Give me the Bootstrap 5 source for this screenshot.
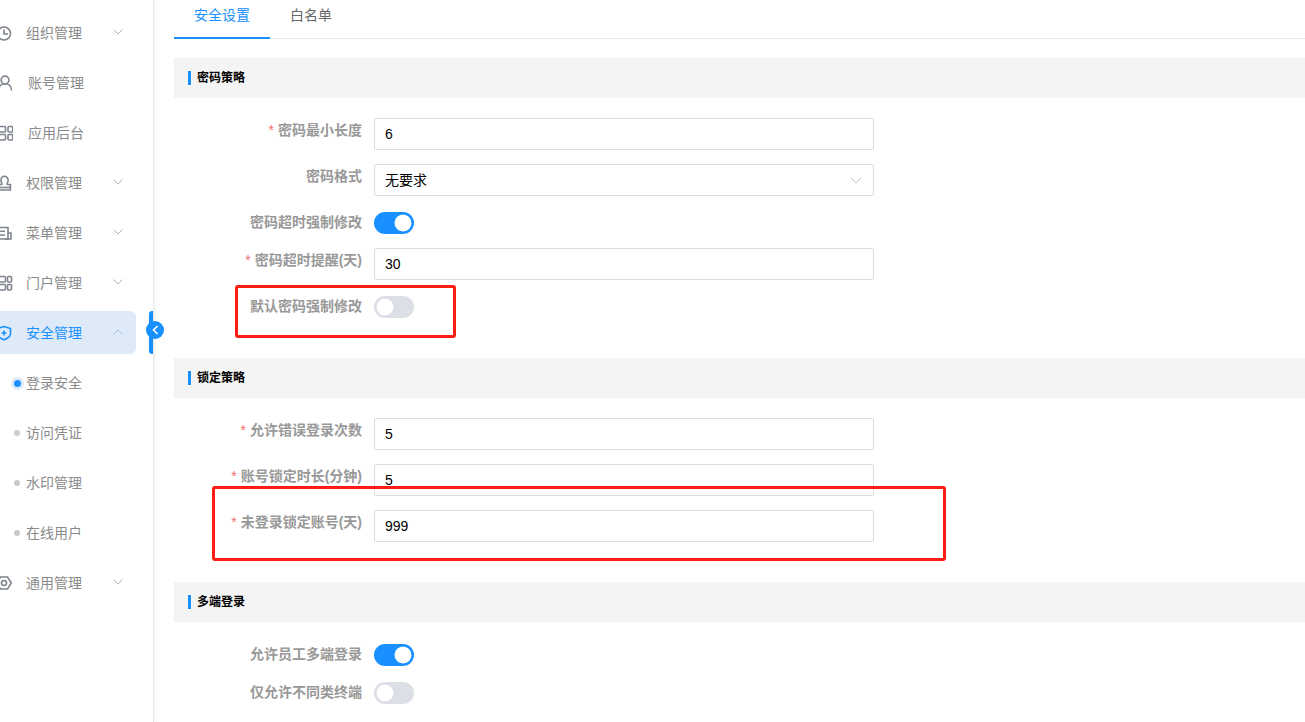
<!DOCTYPE html>
<html lang="zh">
<head>
<meta charset="utf-8">
<title>安全管理</title>
<link href="https://cdn.jsdelivr.net/npm/bootstrap@5.3.0/dist/css/bootstrap.min.css" rel="stylesheet">
<style>
html,body{height:722px;overflow:hidden;background:#fff}
body{font-family:"Liberation Sans","Noto Sans CJK SC",sans-serif;font-size:14px;color:#000}
.shell{height:722px;position:relative;overflow:hidden}
.side{width:154px;flex:none;height:722px;border-right:1px solid #e8e8e8;box-shadow:1px 0 3px rgba(0,0,0,.06);padding-top:8px;overflow:hidden}
.mitem{height:50px;position:relative;display:flex;align-items:center;color:#8a8a8a;font-size:14px;padding-left:26px}
.mitem.pad2{padding-left:28px}
.mitem.on{color:#1890ff}
.mitem.on::before{content:"";position:absolute;left:-10px;right:17px;top:3px;height:43px;background:#deeaf7;border-radius:6px}
.mitem>*{position:relative}
.mico{position:absolute!important;left:-3px;top:17px;width:16px;height:16px;fill:none;stroke:#7f848e;stroke-width:1.6}
.on .mico{stroke:#1890ff}
.chev{position:absolute!important;left:113px;top:21px;width:10px;height:6px;fill:none;stroke:#b3b3b3;stroke-width:1}
.on .chev{stroke:#9cc4ea}
.dot{position:absolute!important;left:14px;top:22px;width:6px;height:6px;border-radius:50%;background:#ccc}
.dot.cur{background:#1890ff;box-shadow:0 0 0 3px #deeaf7;left:14px;width:7px;height:7px}
.handle{position:absolute;left:149px;top:311px;width:4px;height:43px;background:#1890ff;border-radius:3px 0 0 3px}
.hcirc{position:absolute;left:146px;top:321px;width:18px;height:18px;border-radius:50%;background:#1890ff;display:flex;align-items:center;justify-content:center}
.hcirc svg{width:7px;height:10px;fill:none;stroke:#fff;stroke-width:1.6}
.main-pane{margin-left:20px;flex:1;min-width:0}
.tabbar{height:39px;border-bottom:1px solid #e4e7ed;display:flex}
.tabx{width:96px;height:39px;line-height:31px;text-align:center;color:#1890ff;border-bottom:2px solid #1890ff}
.tabx.off{width:auto;padding:0 20px;color:#666;border-bottom:0}
.sect{height:40px;background:#f4f4f4;margin-top:19px;margin-bottom:20px;display:flex;align-items:center;padding-left:14px;font-size:12px;font-weight:700;color:#000}
.sect::before{content:"";width:3px;height:14px;background:#1890ff;margin-right:6px}
.sect.next{margin-top:40px}
.frow{display:flex;margin-bottom:14px}
.flabel{width:200px;padding-right:12px;text-align:right;font-size:14px;line-height:24px;color:#999;font-weight:700;flex:none}
.flabel i{font-style:normal;color:#f56c6c;font-weight:400;margin-right:4px}
.finput.form-control,.finput.form-select{width:500px;height:32px;padding:0 10px;font-size:14px;color:#000;border:1px solid #dcdcdc;border-radius:2px;line-height:30px;font-family:inherit;box-shadow:none}
.finput.form-select{background-image:none;position:relative}
.selwrap{position:relative;width:500px}
.selwrap svg{position:absolute;right:12px;top:13px;width:12px;height:7px;fill:none;stroke:#c0c4cc;stroke-width:1;pointer-events:none}
.form-switch.swx{padding:0;margin:0;min-height:24px;display:flex;align-items:center}
.form-switch.swx .form-check-input{width:40px;height:22px;margin:1px 0 0 0;border:0;border-radius:11px;background-color:#dcdfe6;background-image:radial-gradient(circle closest-side,#fff 8px,transparent 8.8px);background-size:22px 22px;background-repeat:no-repeat;background-position:left center;box-shadow:none}
.form-switch.swx .form-check-input:checked{background-color:#1890ff;background-position:right center;background-image:radial-gradient(circle closest-side,#fff 8px,transparent 8.8px)}
.redbox{position:absolute;border:3px solid #ff1c10;border-radius:3px;pointer-events:none}
.rb1{left:235px;top:285px;width:221px;height:53px}
.rb2{left:212px;top:486px;width:734px;height:75px}
</style>
</head>
<body>
<div class="shell d-flex">
  <nav class="side">
    <div class="mitem"><svg class="mico" viewBox="0 0 16 16"><circle cx="7" cy="8.500" r="6.500"/><path d="M7 4.500V9H11"/></svg><span>组织管理</span><svg class="chev" viewBox="0 0 10 6"><path d="M.5.500l4.500 4.500L9.500.500"/></svg></div>
    <div class="mitem pad2"><svg class="mico" viewBox="0 0 16 16"><circle cx="8" cy="5" r="3.900"/><path d="M1.500 15.500c0-4 2.500-6.700 6.500-6.700s6.500 2.700 6.500 6.700"/></svg><span>账号管理</span></div>
    <div class="mitem pad2"><svg class="mico" viewBox="0 0 16 16"><rect x="2" y="1.500" width="6.500" height="5.500" rx="1"/><rect x="11" y="1.500" width="4.700" height="5.500" rx="1"/><rect x="2" y="9.500" width="6.500" height="5.500" rx="1"/><rect x="11" y="9.500" width="4.700" height="5.500" rx="1"/></svg><span>应用后台</span></div>
    <div class="mitem"><svg class="mico" viewBox="0 0 16 16"><path d="M4.800 9.500V8C3.300 6.500 3.500 1.300 7.500 1.200 11.500 1.300 11.700 6.500 10.200 8V9.500H13.400V15H0V9.500Z"/><path d="M0 12.500h13"/></svg><span>权限管理</span><svg class="chev" viewBox="0 0 10 6"><path d="M.5.500l4.500 4.500L9.500.500"/></svg></div>
    <div class="mitem"><svg class="mico" viewBox="0 0 16 16"><path d="M0 2.500H11V14H0"/><path d="M11 8h3v6H8"/><path d="M3 6.200h5M3 10h5"/></svg><span>菜单管理</span><svg class="chev" viewBox="0 0 10 6"><path d="M.5.500l4.500 4.500L9.500.500"/></svg></div>
    <div class="mitem"><svg class="mico" viewBox="0 0 16 16"><rect x="2" y="1.500" width="6.500" height="5.500" rx="1"/><rect x="10.500" y="1.500" width="4" height="5.500" rx="1"/><rect x="2" y="9.500" width="6.500" height="5.500" rx="1"/><rect x="10.500" y="9.500" width="4" height="5.500" rx="1"/></svg><span>门户管理</span><svg class="chev" viewBox="0 0 10 6"><path d="M.5.500l4.500 4.500L9.500.500"/></svg></div>
    <div class="mitem on"><svg class="mico" viewBox="0 0 16 16"><path d="M7 1.500l6.500 2v5c0 3-2.800 5-6.500 6.200C3.300 13.500.500 11.500.500 8.500v-5Z"/><path d="M7 5.500v5M4.500 8h5"/></svg><span>安全管理</span><svg class="chev" viewBox="0 0 10 6"><path d="M.5 5.500L5 1l4.500 4.500"/></svg></div>
    <div class="mitem"><span class="dot cur"></span><span>登录安全</span></div>
    <div class="mitem"><span class="dot"></span><span>访问凭证</span></div>
    <div class="mitem"><span class="dot"></span><span>水印管理</span></div>
    <div class="mitem"><span class="dot"></span><span>在线用户</span></div>
    <div class="mitem"><svg class="mico" viewBox="0 0 16 16"><path d="M3.500 2h7l3.800 6-3.800 6h-7L0 8Z"/><circle cx="7" cy="8" r="2.500"/></svg><span>通用管理</span><svg class="chev" viewBox="0 0 10 6"><path d="M.5.500l4.500 4.500L9.500.500"/></svg></div>
  </nav>
  <div class="handle"></div>
  <div class="hcirc"><svg viewBox="0 0 7 10"><path d="M5.500 1L1.500 5l4 4"/></svg></div>
  <main class="main-pane">
    <div class="tabbar"><div class="tabx">安全设置</div><div class="tabx off">白名单</div></div>

    <div class="sect">密码策略</div>
    <div class="frow"><label class="flabel"><i>*</i>密码最小长度</label><input class="form-control finput" value="6"></div>
    <div class="frow"><label class="flabel">密码格式</label><div class="selwrap"><select class="form-select finput"><option>无要求</option></select><svg viewBox="0 0 12 7"><path d="M1 1l5 5 5-5"/></svg></div></div>
    <div class="frow"><label class="flabel">密码超时强制修改</label><div class="form-check form-switch swx"><input class="form-check-input" type="checkbox" checked></div></div>
    <div class="frow"><label class="flabel"><i>*</i>密码超时提醒(天)</label><input class="form-control finput" value="30"></div>
    <div class="frow"><label class="flabel">默认密码强制修改</label><div class="form-check form-switch swx"><input class="form-check-input" type="checkbox"></div></div>

    <div class="sect next">锁定策略</div>
    <div class="frow"><label class="flabel"><i>*</i>允许错误登录次数</label><input class="form-control finput" value="5"></div>
    <div class="frow"><label class="flabel"><i>*</i>账号锁定时长(分钟)</label><input class="form-control finput" value="5"></div>
    <div class="frow"><label class="flabel"><i>*</i>未登录锁定账号(天)</label><input class="form-control finput" value="999"></div>

    <div class="sect next">多端登录</div>
    <div class="frow"><label class="flabel">允许员工多端登录</label><div class="form-check form-switch swx"><input class="form-check-input" type="checkbox" checked></div></div>
    <div class="frow"><label class="flabel">仅允许不同类终端</label><div class="form-check form-switch swx"><input class="form-check-input" type="checkbox"></div></div>
  </main>
  <div class="redbox rb1"></div>
  <div class="redbox rb2"></div>
</div>
<script src="https://cdn.jsdelivr.net/npm/bootstrap@5.3.0/dist/js/bootstrap.bundle.min.js"></script>
</body>
</html>
